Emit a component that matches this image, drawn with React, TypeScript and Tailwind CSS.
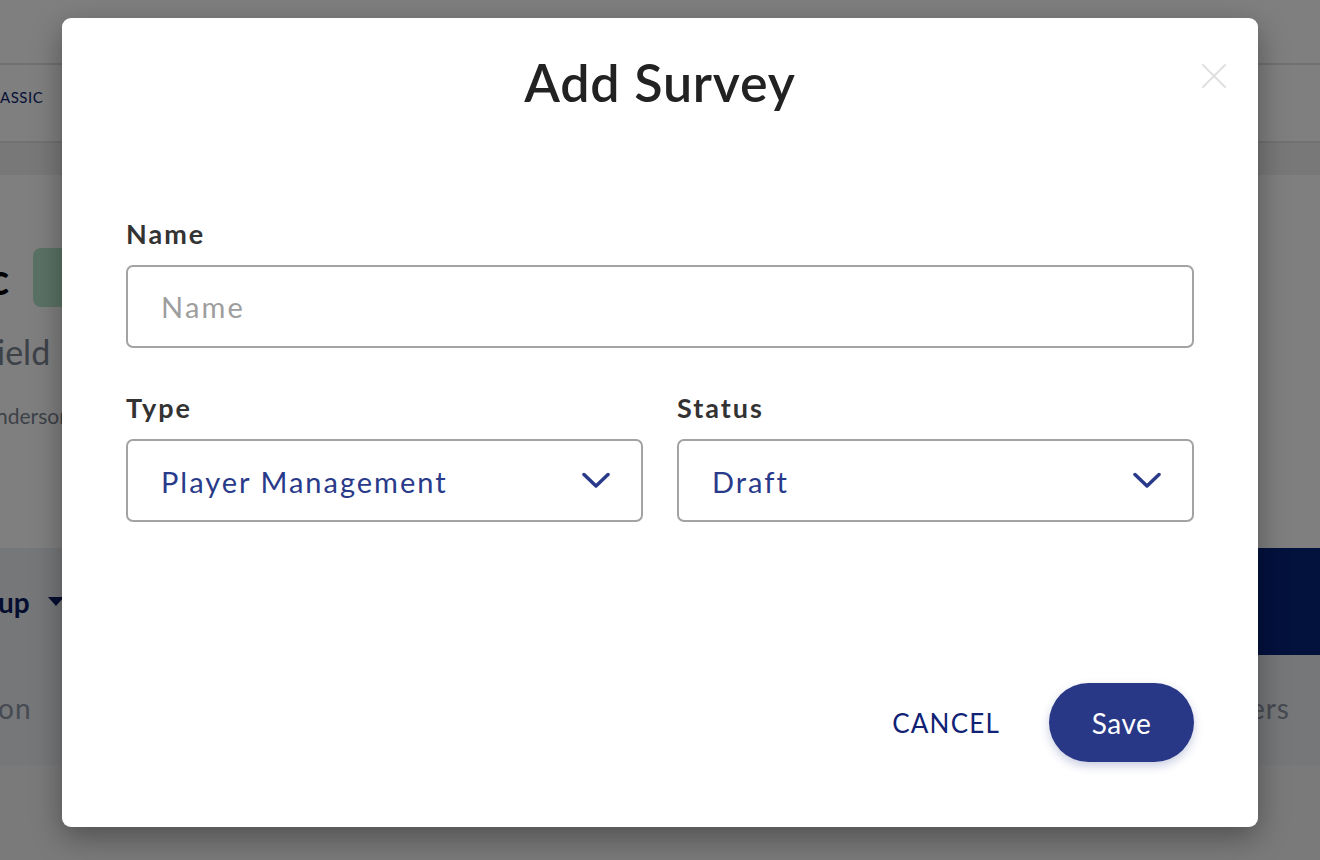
import React from "react";

const font = { fontFamily: "Lato, 'Open Sans', sans-serif" };

function Chevron() {
    return (
        <svg width="28" height="17" viewBox="0 0 28 17" fill="none" stroke="currentColor" strokeWidth={3.5} strokeLinecap="round" strokeLinejoin="round">
            <path d="M2 2.5 L14 14 L26 2.5" />
        </svg>
    );
}

function Select({ value }: { value: string }) {
    return (
        <div className="flex h-[83px] items-center justify-between rounded-[7px] border-2 border-[#a3a3a3] pl-[33px] pr-[31px] text-[#293a8a]">
            <span className="pt-[2px] text-[29px] tracking-[2px]">{value}</span>
            <Chevron />
        </div>
    );
}

export default function App() {
    return (
        <div className="relative h-[860px] w-[1320px] overflow-hidden bg-[#f5f5f5]" style={font}>
            {/* page behind the dialog */}
            <div className="h-[65px] border-b-2 border-[#e2e2e2] bg-white" />
            <div className="flex h-[78px] items-center border-b-2 border-[#e2e2e2] bg-white pb-[12px]">
                <span className="text-[15px] tracking-[0.5px] text-[#0b1f6e]">ASSIC</span>
            </div>
            <div className="h-[32px] bg-[#f0f0f0]" />
            <div className="h-[373px] bg-white">
                <div className="flex items-center gap-[24px] pt-[73px]">
                    <span className="-ml-[12px] text-[44px] font-bold leading-none text-black">c</span>
                    <div className="h-[59px] w-[120px] rounded-[8px] bg-[#b5e5cc]" />
                </div>
                <div className="-ml-[3px] mt-[28px] text-[34px] leading-none text-[#7b8492]">ield</div>
                <div className="-ml-[4px] mt-[36px] text-[21px] leading-none text-[#7b8492]">nderson</div>
            </div>
            <div className="h-[217px] bg-[#eceef2]">
                <div className="flex h-[107px] items-center justify-between">
                    <div className="-ml-[2px] flex items-center gap-[18px] text-[28px] font-bold text-[#0a1d63]">
                        up
                        <span className="h-0 w-0 border-x-[8px] border-t-[9px] border-x-transparent border-t-[#0a1d63]" />
                    </div>
                    <div className="flex h-full w-[120px] items-center bg-[#06237a] pl-[2px]">
                        <span className="h-0 w-0 border-x-[8px] border-t-[9px] border-x-transparent border-t-[#dcdcdc]" />
                    </div>
                </div>
                <div className="flex h-[110px] items-center justify-between pb-[4px]">
                    <span className="-ml-[2px] text-[28px] tracking-[1px] text-[#8c94a3]">on</span>
                    <span className="pr-[30px] text-[28px] tracking-[1px] text-[#8c94a3]">ers</span>
                </div>
            </div>

            {/* overlay + dialog */}
            <div className="absolute inset-0 flex justify-center bg-black/50 pt-[18px]">
                <div className="relative h-[809px] w-[1196px] rounded-[9px] bg-white px-[64px] shadow-[0_10px_30px_rgba(0,0,0,0.35)]">
                    <button className="absolute right-[32px] top-[46px] text-[#e0e0e0]">
                        <svg width="24" height="24" viewBox="0 0 24 24" fill="none" stroke="currentColor" strokeWidth={2} strokeLinecap="round">
                            <path d="M1 1 L23 23 M23 1 L1 23" />
                        </svg>
                    </button>

                    <h1 className="pt-[33px] text-center text-[52px] font-semibold leading-[62px] tracking-[0.8px] text-[#222222]">Add Survey</h1>

                    <label className="mt-[105px] block text-[27px] font-bold leading-[32px] tracking-[2px] text-[#333333]">Name</label>
                    <div className="mt-[15px] flex h-[83px] items-center rounded-[7px] border-2 border-[#a3a3a3] pl-[33px]">
                        <span className="text-[29px] tracking-[2.2px] text-[#9e9e9e]">Name</span>
                    </div>

                    <div className="mt-[44px] grid grid-cols-2 gap-x-[34px]">
                        <div>
                            <label className="block text-[27px] font-bold leading-[32px] tracking-[2px] text-[#333333]">Type</label>
                            <div className="mt-[15px]">
                                <Select value="Player Management" />
                            </div>
                        </div>
                        <div>
                            <label className="block text-[27px] font-bold leading-[32px] tracking-[2px] text-[#333333]">Status</label>
                            <div className="mt-[15px]">
                                <Select value="Draft" />
                            </div>
                        </div>
                    </div>

                    <div className="mt-[161px] flex items-center justify-end gap-[49px]">
                        <button className="pt-[2px] text-[26px] tracking-[1.2px] text-[#0f2275]">CANCEL</button>
                        <button className="h-[79px] w-[145px] rounded-full bg-[#283887] text-[28px] tracking-[0.5px] text-white shadow-[0_4px_10px_rgba(40,56,135,0.25)]">Save</button>
                    </div>
                </div>
            </div>
        </div>
    );
}
